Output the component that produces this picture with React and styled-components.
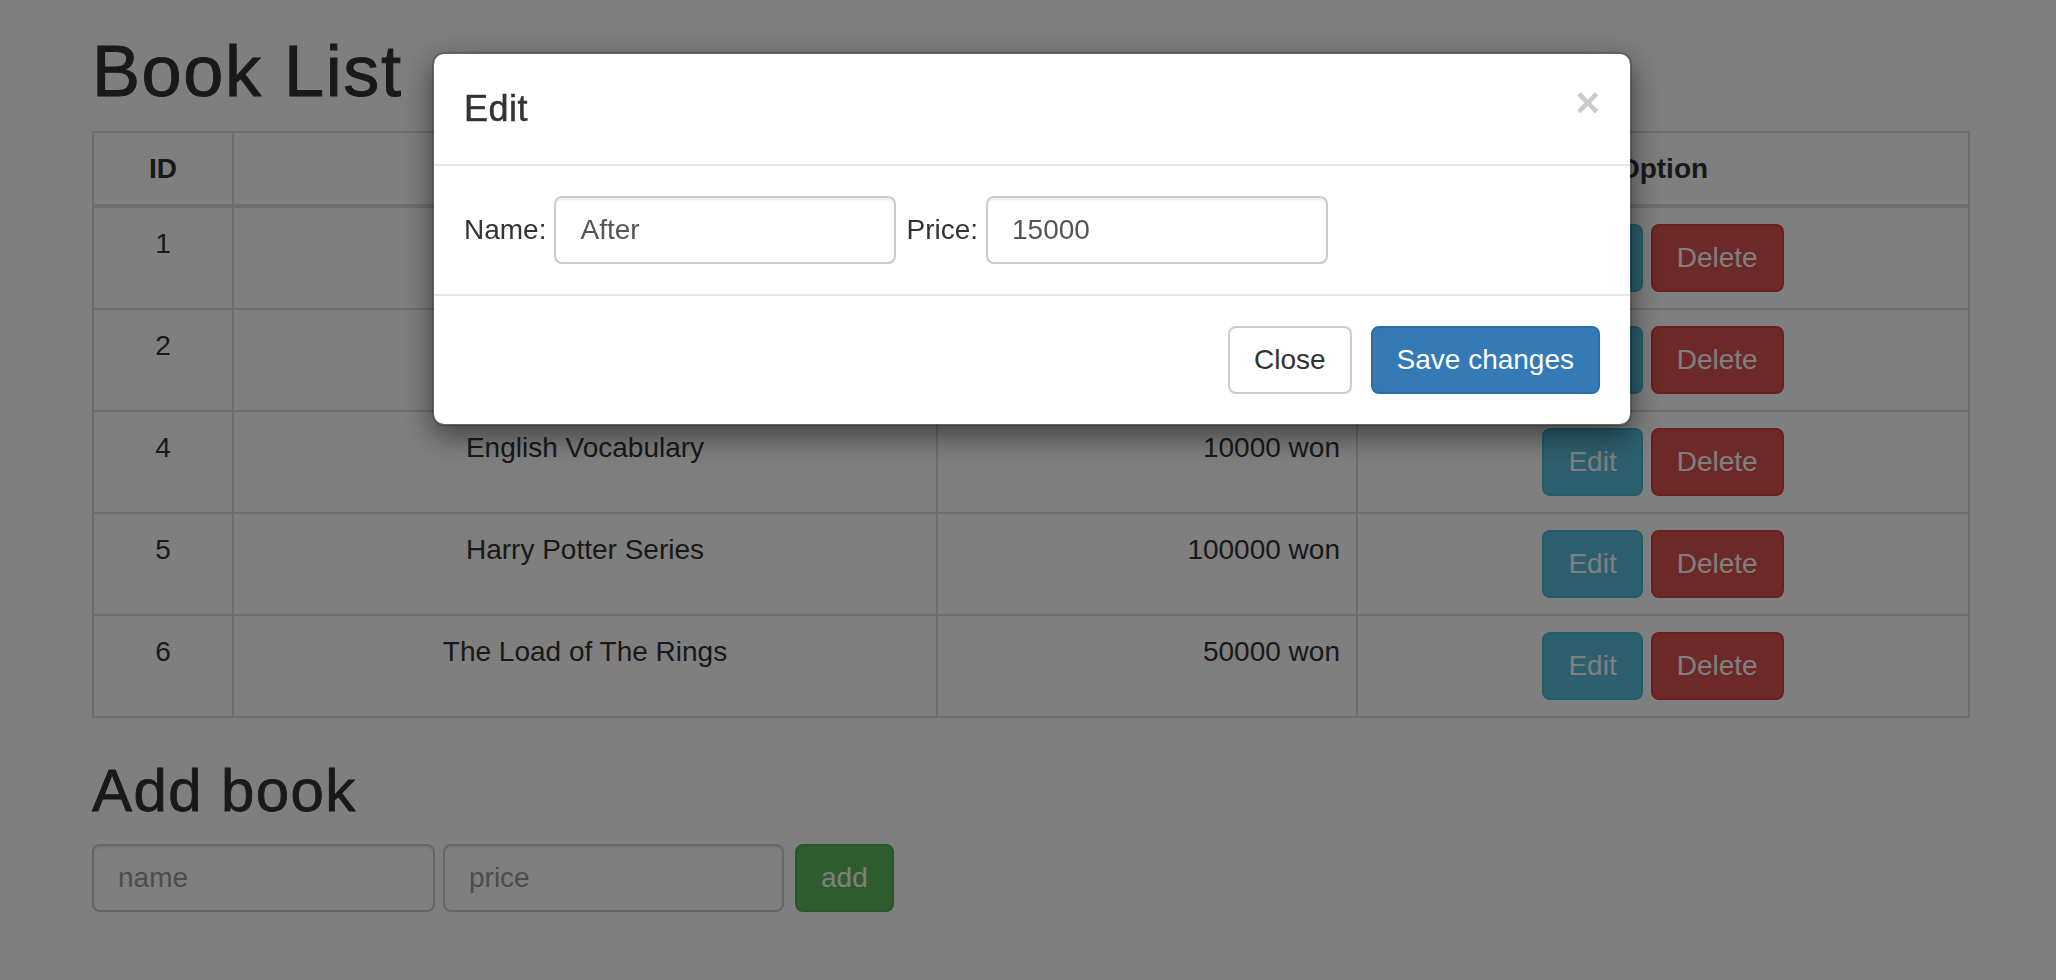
import React from 'react';
import styled, { createGlobalStyle } from 'styled-components';

const GlobalStyle = createGlobalStyle`
  html, body {
    margin: 0;
    padding: 0;
    overflow: hidden;
  }

  body {
    background: #fff;
    color: #333;
    font-family: "Liberation Sans", Arial, sans-serif;
    font-size: 28px;
    line-height: 40px;
  }

  * {
    box-sizing: border-box;
  }
`;

const variants = {
  default: { bg: '#fff', border: '#ccc', color: '#333' },
  primary: { bg: '#337ab7', border: '#2e6da4', color: '#fff' },
  info: { bg: '#5bc0de', border: '#46b8da', color: '#fff' },
  danger: { bg: '#d9534f', border: '#d43f3a', color: '#fff' },
  success: { bg: '#5cb85c', border: '#4cae4c', color: '#fff' }
};

const books = [
  { id: 1, name: 'Before', price: 12000 },
  { id: 2, name: 'Java', price: 20000 },
  { id: 4, name: 'English Vocabulary', price: 10000 },
  { id: 5, name: 'Harry Potter Series', price: 100000 },
  { id: 6, name: 'The Load of The Rings', price: 50000 }
];

// the source page was a few px wider than the shot, so centre a little right
const Page = styled.div`
  padding-left: 8px;
`;

const Container = styled.div`
  width: 1940px;
  margin: 0 auto;
  padding: 0 30px;
`;

const Title = styled.h1`
  margin: 32px 0 20px;
  font-size: 72px;
  line-height: 1.1;
  font-weight: 500;
  letter-spacing: 1.6px;
  -webkit-text-stroke: 1px #333;
  color: #333;
`;

const SubTitle = styled.h2`
  margin: 40px 0 20px;
  font-size: 60px;
  line-height: 1.1;
  font-weight: 500;
  letter-spacing: 1.4px;
  -webkit-text-stroke: 0.8px #333;
  color: #333;
`;

const Table = styled.table`
  width: 1876px;
  table-layout: fixed;
  border-collapse: collapse;
  border: 2px solid #ddd;
  margin-bottom: 40px;
`;

const HeadCell = styled.th`
  padding: 16px 16px 15px;
  border: 2px solid #ddd;
  border-bottom-width: 4px;
  font-weight: bold;
  text-align: center;
  vertical-align: bottom;
  line-height: 40px;
`;

const Cell = styled.td`
  padding: 16px;
  border: 2px solid #ddd;
  line-height: 40px;
  vertical-align: top;
  text-align: ${props => props.align || 'center'};
`;

const Button = styled.button`
  display: inline-block;
  margin: 0;
  margin-left: ${props => props.gap || 0}px;
  padding: 12px 24px;
  font-family: inherit;
  font-size: 28px;
  line-height: 40px;
  font-weight: 400;
  white-space: nowrap;
  border-radius: 8px;
  border: 2px solid ${props => variants[props.variant].border};
  background: ${props => variants[props.variant].bg};
  color: ${props => variants[props.variant].color};
  cursor: pointer;
`;

const TextInput = styled.input`
  width: ${props => props.width || 342}px;
  height: 68px;
  padding: 12px 24px;
  font-family: inherit;
  font-size: 28px;
  line-height: 40px;
  color: #555;
  background: #fff;
  border: 2px solid #ccc;
  border-radius: 8px;
  box-shadow: inset 0 2px 2px rgba(0, 0, 0, 0.075);
  outline: none;

  &::placeholder {
    color: #999;
  }
`;

const AddRow = styled.div`
  display: flex;
  align-items: center;
  gap: 8px;
`;

const Backdrop = styled.div`
  position: fixed;
  inset: 0;
  padding-left: 8px;
  background: rgba(0, 0, 0, 0.5);
`;

const Dialog = styled.div`
  width: 1200px;
  margin: 52px auto 0;
  background: #fff;
  border: 2px solid rgba(0, 0, 0, 0.2);
  border-radius: 12px;
  box-shadow: 0 10px 30px rgba(0, 0, 0, 0.5);
  background-clip: padding-box;
`;

const DialogHeader = styled.div`
  display: flex;
  justify-content: space-between;
  align-items: flex-start;
  padding: 30px;
  border-bottom: 2px solid #e5e5e5;
`;

const DialogTitle = styled.h4`
  margin: 0;
  font-size: 36px;
  line-height: 50px;
  font-weight: 500;
  letter-spacing: 0.5px;
  -webkit-text-stroke: 0.5px #333;
  color: #333;
`;

const CloseX = styled.button`
  margin-top: -2px;
  padding: 0;
  border: 0;
  background: transparent;
  font-family: inherit;
  font-size: 42px;
  font-weight: bold;
  line-height: 1;
  color: #000;
  opacity: 0.2;
  cursor: pointer;
`;

const DialogBody = styled.div`
  display: flex;
  align-items: center;
  padding: 30px;
`;

const FieldLabel = styled.label`
  margin-right: 8px;
  color: #333;
`;

const DialogFooter = styled.div`
  display: flex;
  justify-content: flex-end;
  padding: 30px;
  border-top: 2px solid #e5e5e5;
`;

const BookRow = ({ book }) => (
  <tr>
    <Cell>{book.id}</Cell>
    <Cell>{book.name}</Cell>
    <Cell align="right">{book.price} won</Cell>
    <Cell>
      <Button variant="info">Edit</Button>
      <Button variant="danger" gap={8}>Delete</Button>
    </Cell>
  </tr>
);

const EditModal = () => (
  <Backdrop>
    <Dialog>
      <DialogHeader>
        <DialogTitle>Edit</DialogTitle>
        <CloseX aria-label="Close">×</CloseX>
      </DialogHeader>
      <DialogBody>
        <FieldLabel>Name:</FieldLabel>
        <TextInput defaultValue="After" style={{ marginRight: 10 }} />
        <FieldLabel>Price:</FieldLabel>
        <TextInput defaultValue="15000" />
      </DialogBody>
      <DialogFooter>
        <Button variant="default">Close</Button>
        <Button variant="primary" gap={19}>Save changes</Button>
      </DialogFooter>
    </Dialog>
  </Backdrop>
);

export default function App() {
  return (
    <Page>
      <GlobalStyle />
      <Container>
        <Title>Book List</Title>
        <Table>
          <colgroup>
            <col style={{ width: 140 }} />
            <col style={{ width: 704 }} />
            <col style={{ width: 420 }} />
            <col style={{ width: 612 }} />
          </colgroup>
          <thead>
            <tr>
              <HeadCell>ID</HeadCell>
              <HeadCell>Name</HeadCell>
              <HeadCell>Price</HeadCell>
              <HeadCell>Option</HeadCell>
            </tr>
          </thead>
          <tbody>
            {books.map(book => (
              <BookRow key={book.id} book={book} />
            ))}
          </tbody>
        </Table>
        <SubTitle>Add book</SubTitle>
        <AddRow>
          <TextInput placeholder="name" width={343} />
          <TextInput placeholder="price" width={341} />
          <Button variant="success" gap={3}>add</Button>
        </AddRow>
      </Container>
      <EditModal />
    </Page>
  );
}
